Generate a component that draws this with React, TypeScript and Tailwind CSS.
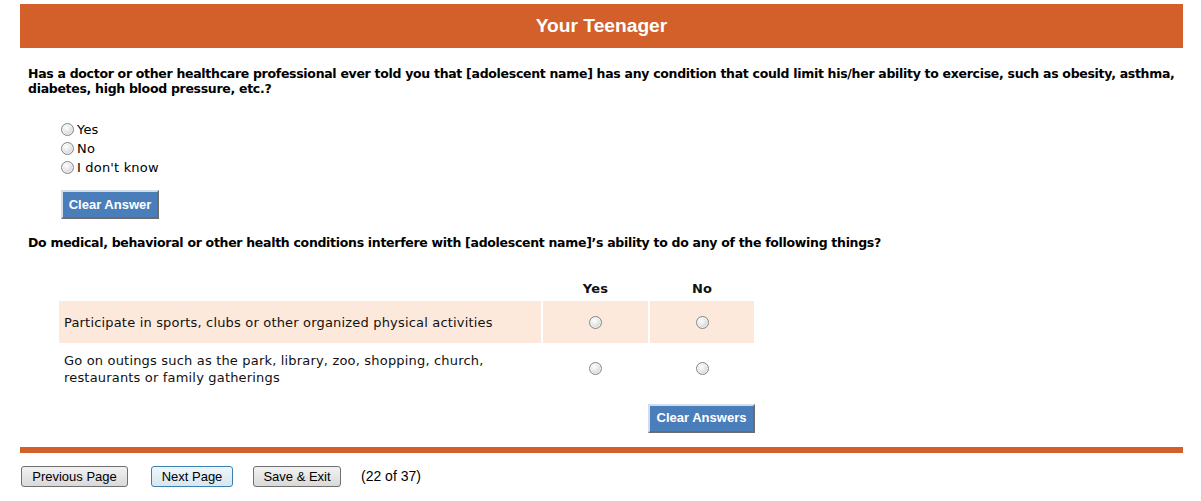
import React from 'react'

const verdana = { fontFamily: '"DejaVu Sans", Verdana, sans-serif' }

function Radio() {
  return (
    <span className="inline-block w-[13px] h-[13px] rounded-full border border-[#858686] bg-[radial-gradient(circle_at_40%_35%,#ffffff_0%,#e6e6e6_45%,#c4c4c4_100%)] shadow-[inset_0_0_0_1px_rgba(255,255,255,0.6)] align-middle" />
  )
}

function BlueButton({ label, width }: { label: string; width: string }) {
  return (
    <button
      className={`${width} h-[29px] bg-[#4a7ebb] text-white font-bold text-[13px] border-2 border-solid border-t-[#d3dde9] border-l-[#d3dde9] border-r-[#6c6c6c] border-b-[#6c6c6c] flex items-center justify-center`}
      style={{ fontFamily: '"Liberation Sans", Arial, sans-serif' }}
    >
      {label}
    </button>
  )
}

function NavButton({ label, active, width }: { label: string; active?: boolean; width: string }) {
  return (
    <button
      className={`${width} h-[21px] rounded-[3px] border text-[13px] text-black leading-none flex items-center justify-center ${
        active
          ? 'border-[#3c7fb1] bg-gradient-to-b from-[#eef6fb] to-[#d8e6ef]'
          : 'border-[#707070] bg-gradient-to-b from-[#f2f2f2] to-[#d9d9d9]'
      }`}
      style={{ fontFamily: '"Liberation Sans", Arial, sans-serif' }}
    >
      {label}
    </button>
  )
}

const options = ['Yes', 'No', "I don't know"]

const activities = [
  { text: 'Participate in sports, clubs or other organized physical activities', shaded: true },
  { text: 'Go on outings such as the park, library, zoo, shopping, church, restaurants or family gatherings', shaded: false },
]

export default function App() {
  return (
    <div className="w-[1201px] h-[501px] bg-white overflow-hidden pt-[4px]" style={verdana}>
      <div className="mx-[20px] w-[1163px]">
        <div className="h-[44px] bg-[#d35f2b] flex items-center justify-center">
          <h1
            className="text-white font-bold text-[19.2px]"
            style={{ fontFamily: '"Liberation Sans", Arial, sans-serif' }}
          >
            Your Teenager
          </h1>
        </div>

        <p className="mt-[18px] ml-[8px] text-[12.5px] tracking-[-0.3px] leading-[15px] font-bold text-black">
          Has a doctor or other healthcare professional ever told you that [adolescent name] has any condition that could limit his/her ability to exercise, such as obesity, asthma, diabetes, high blood pressure, etc.?
        </p>

        <div className="mt-[24px] ml-[41px] flex flex-col">
          {options.map((o) => (
            <label key={o} className="h-[19px] flex items-center gap-[3px] text-[13px] tracking-[0.18px] text-black">
              <Radio />
              {o}
            </label>
          ))}
        </div>

        <div className="mt-[13px] ml-[41px]">
          <BlueButton label="Clear Answer" width="w-[98px]" />
        </div>

        <p className="mt-[16px] ml-[8px] text-[12.5px] tracking-[-0.3px] leading-[15px] font-bold text-black">
          Do medical, behavioral or other health conditions interfere with [adolescent name]’s ability to do any of the following things?
        </p>

        <div className="mt-[24px] ml-[37px] w-[699px]">
          <table className="border-separate border-spacing-[2px] text-[13px] tracking-[0.18px] text-[#111]">
            <thead>
              <tr className="h-[22px]">
                <th className="w-[482px]" />
                <th className="w-[105px] pt-[3px] font-bold text-center">Yes</th>
                <th className="w-[104px] pt-[3px] font-bold text-center">No</th>
              </tr>
            </thead>
            <tbody>
              {activities.map((a) => (
                <tr key={a.text} className="h-[42px]">
                  <td className={`px-[5px] pt-[7px] pb-[5px] leading-[17px] align-middle ${a.shaded ? 'bg-[#fce9db]' : ''}`}>
                    {a.text}
                  </td>
                  <td className={`text-center align-middle ${a.shaded ? 'bg-[#fce9db]' : ''}`}>
                    <Radio />
                  </td>
                  <td className={`text-center align-middle ${a.shaded ? 'bg-[#fce9db]' : ''}`}>
                    <Radio />
                  </td>
                </tr>
              ))}
            </tbody>
          </table>
          <div className="mt-[11px] flex justify-end pr-[1px]">
            <BlueButton label="Clear Answers" width="w-[107px]" />
          </div>
        </div>

        <div className="mt-[14px] h-[6px] bg-[#d35f2b]" />

        <div className="mt-[13px] flex items-center ml-[1px]">
          <NavButton label="Previous Page" width="w-[107px]" />
          <div className="ml-[23px]">
            <NavButton label="Next Page" active width="w-[82px]" />
          </div>
          <div className="ml-[20px]">
            <NavButton label="Save & Exit" width="w-[88px]" />
          </div>
          <span
            className="ml-[20px] text-[14px] text-black"
            style={{ fontFamily: '"Liberation Sans", Arial, sans-serif' }}
          >
            (22 of 37)
          </span>
        </div>
      </div>
    </div>
  )
}
